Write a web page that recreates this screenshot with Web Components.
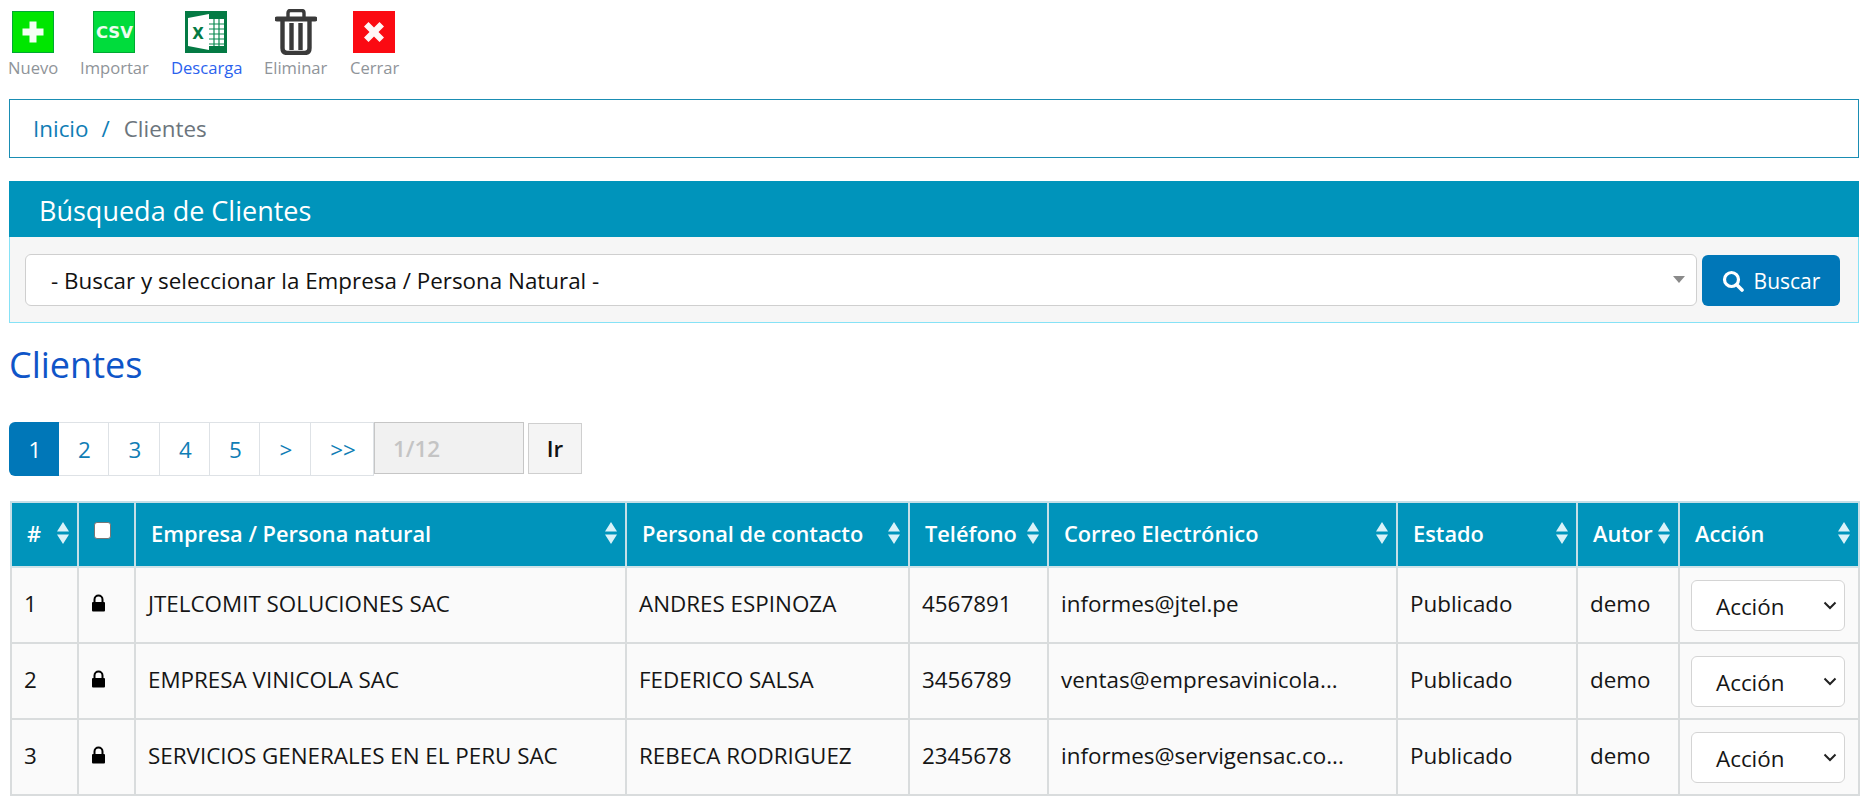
<!DOCTYPE html>
<html lang="es">
<head>
<meta charset="utf-8">
<title>Clientes</title>
<style>
  html, body { margin: 0; background: #fff; }
  body { font-family: "Open Sans", sans-serif; color: #111; padding: 0 13px 10px 9px; }
</style>
</head>
<body>
<app-toolbar>
  <tool-item label="Nuevo" style="--w:49px">
    <svg viewBox="0 0 42 42" width="42" height="42"><rect x=".5" y=".5" width="41" height="41" fill="#00e600" stroke="#00a832"/><path d="M17.500 10.500h7v7h7v7h-7v7h-7v-7h-7v-7h7z" fill="#f4fff4"/></svg>
  </tool-item>
  <tool-item label="Importar" style="--w:68px">
    <svg viewBox="0 0 42 42" width="42" height="42"><rect x=".5" y=".5" width="41" height="41" fill="#00dc3c" stroke="#00a832"/><text x="21.500" y="27" text-anchor="middle" font-family="DejaVu Sans" font-weight="700" font-size="16.500" fill="#eefcf0">CSV</text></svg>
  </tool-item>
  <tool-item label="Descarga" active style="--w:70px">
    <svg viewBox="0 0 42 42" width="42" height="42"><rect width="42" height="42" fill="#047a44"/><rect x="24" y="8" width="15" height="27" fill="#fff"/><path d="M29 8v27M34 8v27M24 13h15M24 18h15M24 23h15M24 28h15M24 33h15" stroke="#0a8a50" stroke-width="1.200"/><path d="M3 7l21-4v36l-21-4z" fill="#fff"/><text x="13" y="27.500" text-anchor="middle" font-family="DejaVu Sans" font-weight="700" font-size="15" fill="#047a44">X</text></svg>
  </tool-item>
  <tool-item label="Eliminar" style="--w:63px">
    <svg viewBox="0 0 42 46" width="42" height="46"><g fill="none" stroke="#3a3a3a"><path d="M13 9V4q0-2.500 2.500-2.500h11q2.500 0 2.500 2.500v5" stroke-width="3.400"/><path d="M2 10h38" stroke-width="5" stroke-linecap="round"/><path d="M7.500 11v28q0 5 5 5h17q5 0 5-5V11" stroke-width="4.400"/><path d="M16.500 14v27M25.500 14v27" stroke-width="4.400"/></g></svg>
  </tool-item>
  <tool-item label="Cerrar" style="--w:48px">
    <svg viewBox="0 0 42 42" width="42" height="42"><rect width="42" height="42" fill="#fb0a12"/><path d="M11 15.500l4.500-4.500 5.500 5.500 5.500-5.500 4.500 4.500-5.500 5.500 5.500 5.500-4.500 4.500-5.500-5.500-5.500 5.500-4.500-4.500 5.500-5.500z" fill="#fff6f6"/></svg>
  </tool-item>
</app-toolbar>

<bread-crumb current="Clientes">Inicio</bread-crumb>

<search-panel heading="Búsqueda de Clientes" placeholder="- Buscar y seleccionar la Empresa / Persona Natural -"></search-panel>

<page-title>Clientes</page-title>

<pager-bar pages="1,2,3,4,5,&gt;,&gt;&gt;" value="1/12"></pager-bar>

<clients-table></clients-table>

<script>
class AppToolbar extends HTMLElement {
  constructor() {
    super();
    this.attachShadow({ mode: "open" });
    this.shadowRoot.innerHTML = `
      <style>
        :host { display: flex; height: 99px; align-items: flex-start; gap: 23px; margin-left: -1px; }
      </style>
      <slot></slot>`;
  }
}

class ToolItem extends HTMLElement {
  connectedCallback() {
    if (this.shadowRoot) return;
    this.attachShadow({ mode: "open" });
    const active = this.hasAttribute("active");
    this.shadowRoot.innerHTML = `
      <style>
        :host { display: block; width: var(--w); }
        .ic { height: 46px; margin-top: 9px; display: flex; justify-content: center; align-items: center; }
        ::slotted(svg) { display: block; }
        span { display: block; text-align: center; font-size: 16.6px; line-height: 20px; margin-top: 3px; white-space: nowrap; color: ${active ? "#2a62ee" : "#8f9499"}; }
      </style>
      <div class="ic"><slot></slot></div>
      <span>${this.getAttribute("label")}</span>`;
  }
}

class BreadCrumb extends HTMLElement {
  connectedCallback() {
    if (this.shadowRoot) return;
    this.attachShadow({ mode: "open" });
    this.shadowRoot.innerHTML = `
      <style>
        :host { display: flex; align-items: center; height: 57px; box-sizing: content-box; border: 1px solid #1a8db3; padding-left: 23px; font-size: 22.4px; color: #0f7db5; }
        i { font-style: normal; padding: 0 14px 0 13px; }
        b { font-weight: 400; color: #6c757d; }
      </style>
      <slot></slot><i>/</i><b>${this.getAttribute("current")}</b>`;
  }
}

class SearchPanel extends HTMLElement {
  connectedCallback() {
    if (this.shadowRoot) return;
    this.attachShadow({ mode: "open" });
    this.shadowRoot.innerHTML = `
      <style>
        :host { display: block; margin-top: 23px; }
        header { background: #0094bb; color: #fff; font-size: 27px; height: 56px; line-height: 60px; padding-left: 30px; }
        .body { display: flex; gap: 5px; height: 86px; box-sizing: border-box; padding: 17px 18px 0 15px; background: #f6f6f6; border: 1px solid #86e2f6; border-top: 0; }
        .sel { flex: 1; height: 52px; box-sizing: border-box; display: flex; align-items: center; background: #fff; border: 1px solid #cfcfcf; border-radius: 6px; padding-left: 25px; font-size: 22.4px; color: #111; position: relative; }
        .sel::after { content: ""; position: absolute; right: 11px; top: 21px; border: 6px solid transparent; border-top: 7px solid #8a8a8a; border-bottom: 0; }
        button { width: 138px; height: 51px; margin-top: 1px; display: flex; align-items: center; justify-content: center; gap: 10px; border: 0; border-radius: 6px; background: #0077b8; color: #fff; font: 21px "Open Sans", sans-serif; }
      </style>
      <header>${this.getAttribute("heading")}</header>
      <div class="body">
        <div class="sel">${this.getAttribute("placeholder")}</div>
        <button type="button"><svg width="22" height="22" viewBox="0 0 22 22" fill="none" stroke="#fff"><circle cx="9.500" cy="9.500" r="7" stroke-width="3.200"/><path d="M15 15l5 5" stroke-width="3.600" stroke-linecap="round"/></svg>Buscar</button>
      </div>`;
  }
}

class PageTitle extends HTMLElement {
  constructor() {
    super();
    this.attachShadow({ mode: "open" });
    this.shadowRoot.innerHTML = `
      <style>
        :host { display: block; margin-top: 17px; height: 82px; font-size: 36px; line-height: 49px; color: #0f55c8; }
      </style>
      <slot></slot>`;
  }
}

class PagerBar extends HTMLElement {
  connectedCallback() {
    if (this.shadowRoot) return;
    this.attachShadow({ mode: "open" });
    const pages = this.getAttribute("pages").split(",");
    const widths = [50, 50, 51, 50, 50, 51, 63];
    this.shadowRoot.innerHTML = `
      <style>
        :host { display: flex; height: 54px; align-items: flex-start; font-size: 22.4px; }
        a { box-sizing: border-box; height: 54px; padding-left: 2px; display: flex; align-items: center; justify-content: center; color: #0f7db5; background: #fff; border: 1px solid #dee2e6; border-left: 0; }
        a.on { background: #0077b8; color: #fff; border: 0; border-radius: 6px 0 0 6px; }
        .inp { box-sizing: border-box; width: 150px; height: 52px; display: flex; align-items: center; padding-left: 18px; background: #f1f1f1; border: 1px solid #c6c6c6; font-weight: 600; color: #c4c4c4; }
        .go { box-sizing: border-box; width: 54px; height: 51px; margin: 1px 0 0 4px; display: flex; align-items: center; justify-content: center; background: #f4f4f4; border: 1px solid #cfcfcf; font-weight: 600; color: #111; }
      </style>
      ${pages.map((p, i) => `<a class="${i === 0 ? "on" : ""}" style="width:${widths[i]}px">${p.replace(">", "&gt;").replace(">", "&gt;")}</a>`).join("")}
      <div class="inp">${this.getAttribute("value")}</div>
      <div class="go">Ir</div>`;
  }
}

const CLIENTS = [
  [1, "JTELCOMIT SOLUCIONES SAC", "ANDRES ESPINOZA", "4567891", "informes@jtel.pe"],
  [2, "EMPRESA VINICOLA SAC", "FEDERICO SALSA", "3456789", "ventas@empresavinicola..."],
  [3, "SERVICIOS GENERALES EN EL PERU SAC", "REBECA RODRIGUEZ", "2345678", "informes@servigensac.co..."],
];

class ClientsTable extends HTMLElement {
  connectedCallback() {
    if (this.shadowRoot) return;
    this.attachShadow({ mode: "open" });
    const arrows = `<svg class="sort" width="12" height="22" viewBox="0 0 12 22" fill="#d9f2f9"><path d="M6 0l6 9.500H0zM6 22l6-9.500H0z"/></svg>`;
    const lock = `<svg width="15" height="18" viewBox="0 0 15 18"><path d="M3.500 9V5.500a4 4 0 0 1 8 0V9" fill="none" stroke="#000" stroke-width="2"/><rect x="1" y="8" width="13" height="9.500" rx="1" fill="#000"/></svg>`;
    const heads = ["#", "", "Empresa / Persona natural", "Personal de contacto", "Teléfono", "Correo Electrónico", "Estado", "Autor", "Acción"];
    const widths = [67, 57, 491, 283, 139, 349, 180, 102, 180];
    this.shadowRoot.innerHTML = `
      <style>
        :host { display: block; margin-top: 25px; margin-left: 1px; }
        table { border-collapse: collapse; table-layout: fixed; width: 1848px; font-size: 22.4px; }
        th, td { border: 2px solid #d9dcdd; padding: 0; white-space: nowrap; overflow: hidden; }
        th { height: 63px; background: #0094bb; color: #fff; font-weight: 600; font-size: 21.8px; text-align: left; border-color: #c5dfe7; border-bottom-color: #cfe3e8; }
        th .in { display: flex; align-items: center; justify-content: space-between; padding: 0 8px 3px 15px; }
        th .sort { flex: none; }
        th.chk { padding-right: 8px; text-align: center; }
        td { height: 70px; background: #fafafa; padding: 0 0 4px 12px; color: #151515; }
        td.mark { padding: 0 16px 4px 0; }
        td.mark svg { display: block; margin: 0 auto; }
        .box { display: inline-block; width: 15px; height: 15px; background: #fff; border: 1px solid #767676; border-radius: 3px; vertical-align: 4px; }
        td.cell-act { height: 74px; padding: 0 0 0 11px; }
        .act { box-sizing: border-box; width: 154px; height: 51px; margin: 0; display: flex; align-items: center; justify-content: space-between; padding: 0 7px 0 24px; background: #fff; border: 1px solid #d4d4d4; border-radius: 6px; }
        .act span { position: relative; top: 1px; }
        tr:nth-child(2) td { border-bottom-width: 2px; }
        tr:nth-child(1) td { border-bottom-width: 1px; }
      </style>
      <table>
        <colgroup>${widths.map(w => `<col style="width:${w}px">`).join("")}</colgroup>
        <thead><tr>${heads.map(h => h
          ? `<th><div class="in"><span>${h}</span>${arrows}</div></th>`
          : `<th class="chk"><span class="box"></span></th>`).join("")}</tr></thead>
        <tbody>${CLIENTS.map(c => `<tr>
          <td>${c[0]}</td>
          <td class="mark">${lock}</td>
          <td>${c[1]}</td>
          <td>${c[2]}</td>
          <td>${c[3]}</td>
          <td>${c[4]}</td>
          <td>Publicado</td>
          <td>demo</td>
          <td class="cell-act"><div class="act"><span>Acción</span><svg width="14" height="9" viewBox="0 0 14 9" fill="none" stroke="#222" stroke-width="2"><path d="M1.500 1.500L7 7l5.500-5.500"/></svg></div></td>
        </tr>`).join("")}</tbody>
      </table>`;
  }
}

customElements.define("app-toolbar", AppToolbar);
customElements.define("tool-item", ToolItem);
customElements.define("bread-crumb", BreadCrumb);
customElements.define("search-panel", SearchPanel);
customElements.define("page-title", PageTitle);
customElements.define("pager-bar", PagerBar);
customElements.define("clients-table", ClientsTable);
</script>
</body>
</html>
